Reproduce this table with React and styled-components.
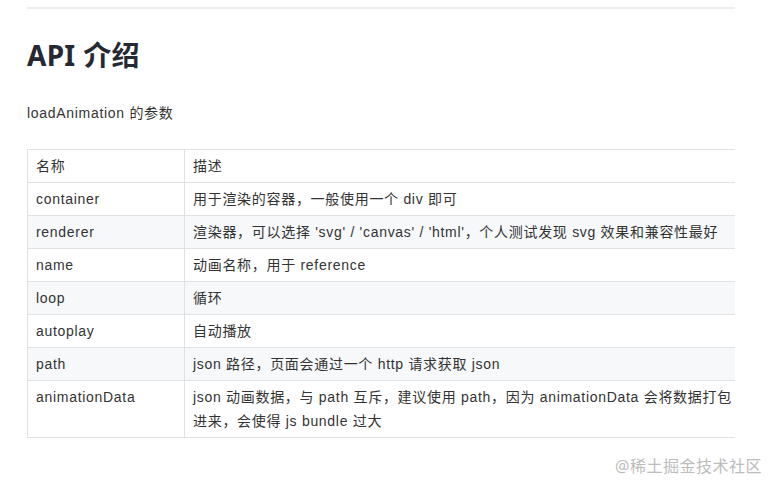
import React from 'react';
import styled, { createGlobalStyle } from 'styled-components';

const GlobalStyle = createGlobalStyle`
    body {
        margin: 0;
        background: #fff;
        font-family: "Noto Sans", "Noto Sans CJK SC", sans-serif;
        color: #333;
    }
`;

const Page = styled.div`
    position: relative;
    width: 777px;
    height: 493px;
    overflow: hidden;
`;

const Article = styled.div`
    width: 708px;
    padding: 7px 0 0 27px;
`;

const Rule = styled.hr`
    margin: 0;
    border: none;
    height: 2px;
    background: #eee;
`;

const Heading = styled.h2`
    margin: 26px 0 0;
    font-size: 28px;
    line-height: 40px;
    font-weight: 700;
    letter-spacing: 0.3px;
    color: #252933;
`;

const Para = styled.p`
    margin: 27px 0 0;
    font-family: "Liberation Sans", "Noto Sans CJK SC", sans-serif;
    font-size: 14px;
    line-height: 22px;
    letter-spacing: 0.7px;
`;

const TableWrap = styled.div`
    margin-top: 25px;
    width: 708px;
    overflow: hidden;
`;

const Table = styled.table`
    width: 722px;
    border-collapse: collapse;
    font-family: "Liberation Sans", "Noto Sans CJK SC", sans-serif;
    font-size: 14px;
    line-height: 24px;
    letter-spacing: 0.7px;
`;

const Row = styled.tr`
    background: ${(props) => (props.striped ? '#f6f8fa' : '#fff')};
`;

const Cell = styled.td`
    border: 1px solid #dfe2e5;
    padding: 4px 8px;
    text-align: left;
    vertical-align: top;
    font-weight: 400;
    width: ${(props) => (props.first ? '140px' : 'auto')};
`;

const Mark = styled.div`
    position: absolute;
    right: 15px;
    bottom: 16px;
    font-size: 16px;
    letter-spacing: 0.5px;
    color: #bcbcbc;
`;

const rows = [
    ['container', '用于渲染的容器，一般使用一个 div 即可'],
    ['renderer', "渲染器，可以选择 'svg' / 'canvas' / 'html'，个人测试发现 svg 效果和兼容性最好"],
    ['name', '动画名称，用于 reference'],
    ['loop', '循环'],
    ['autoplay', '自动播放'],
    ['path', 'json 路径，页面会通过一个 http 请求获取 json'],
    ['animationData', 'json 动画数据，与 path 互斥，建议使用 path，因为 animationData 会将数据打包进来，会使得 js bundle 过大'],
];

const App = () => {
    return (
        <Page>
            <GlobalStyle />
            <Article>
                <Rule />
                <Heading>API 介绍</Heading>
                <Para>loadAnimation 的参数</Para>
                <TableWrap>
                    <Table>
                        <thead>
                            <Row>
                                <Cell as="th" first>名称</Cell>
                                <Cell as="th">描述</Cell>
                            </Row>
                        </thead>
                        <tbody>
                            {rows.map(([name, desc], i) => (
                                <Row key={name} striped={i % 2 === 1}>
                                    <Cell first>{name}</Cell>
                                    <Cell>{desc}</Cell>
                                </Row>
                            ))}
                        </tbody>
                    </Table>
                </TableWrap>
            </Article>
            <Mark>@稀土掘金技术社区</Mark>
        </Page>
    );
};

export default App;
